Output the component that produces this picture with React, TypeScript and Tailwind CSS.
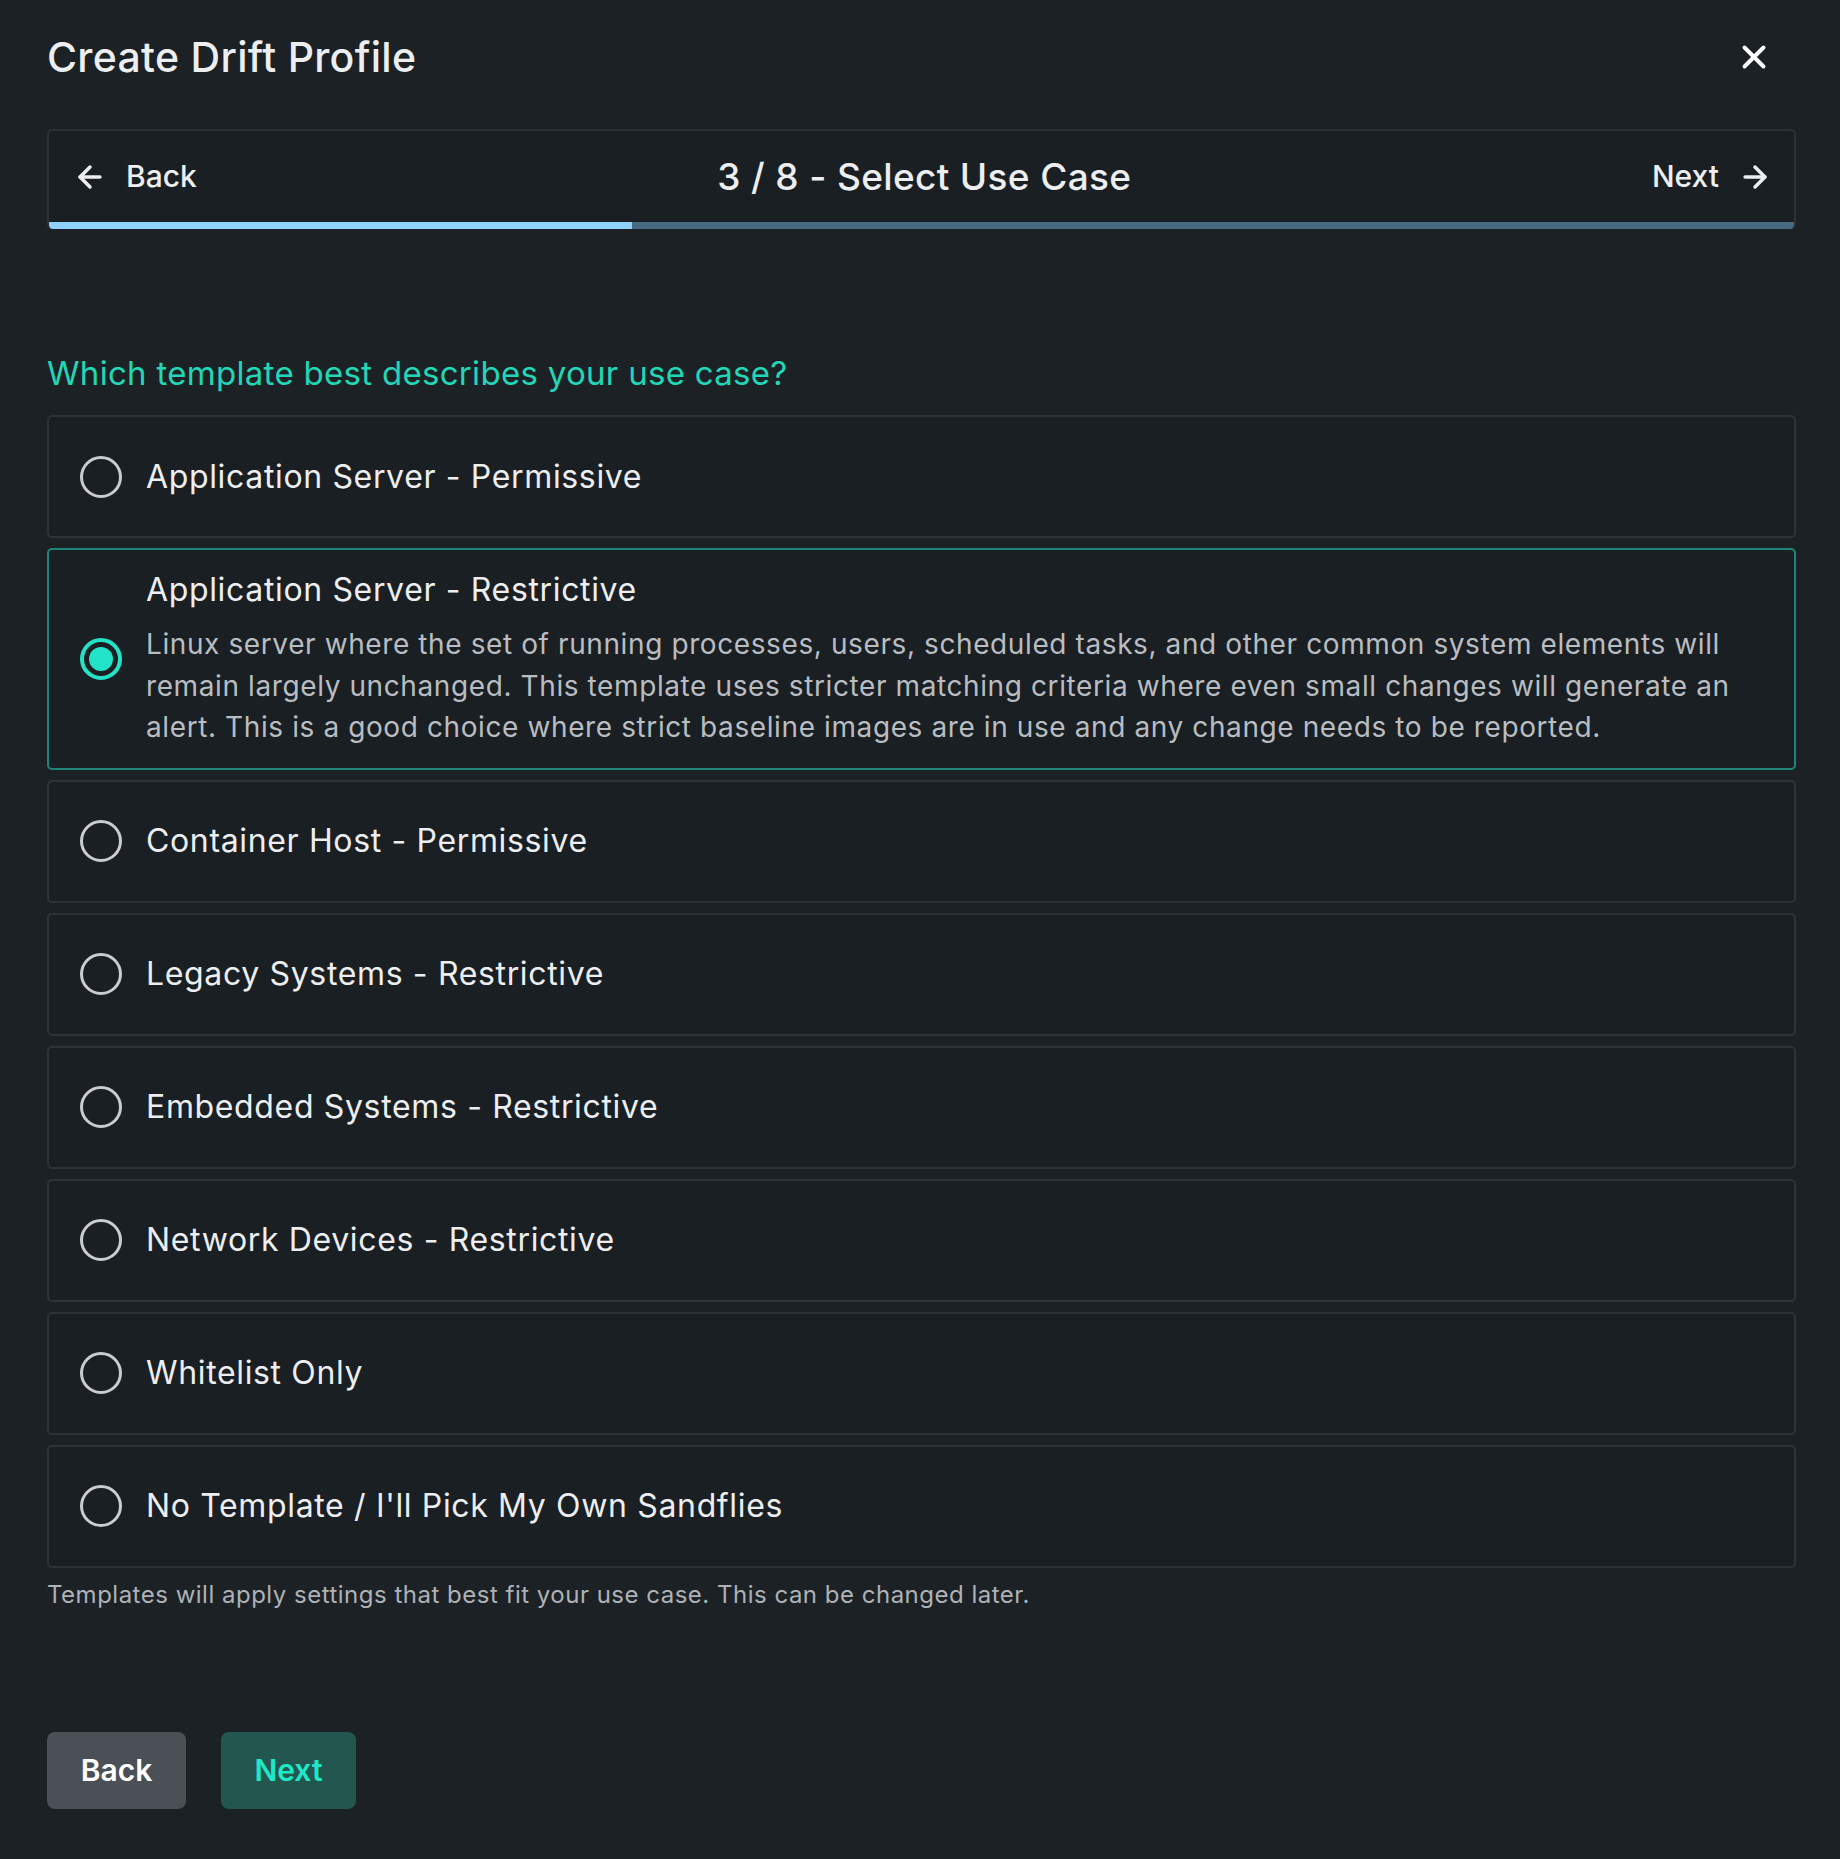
import { useState } from 'react';
import { ArrowLeft, ArrowRight, X } from 'lucide-react';

type Template = {
  id: string;
  name: string;
  description?: string;
};

const templates: Template[] = [
  { id: 'app-permissive', name: 'Application Server - Permissive' },
  {
    id: 'app-restrictive',
    name: 'Application Server - Restrictive',
    description:
      'Linux server where the set of running processes, users, scheduled tasks, and other common system elements will remain largely unchanged. This template uses stricter matching criteria where even small changes will generate an alert. This is a good choice where strict baseline images are in use and any change needs to be reported.',
  },
  { id: 'container-permissive', name: 'Container Host - Permissive' },
  { id: 'legacy-restrictive', name: 'Legacy Systems - Restrictive' },
  { id: 'embedded-restrictive', name: 'Embedded Systems - Restrictive' },
  { id: 'network-restrictive', name: 'Network Devices - Restrictive' },
  { id: 'whitelist', name: 'Whitelist Only' },
  { id: 'none', name: "No Template / I'll Pick My Own Sandflies" },
];

const STEP = 3;
const TOTAL = 8;

const Radio = ({ checked }: { checked: boolean }) => (
  <span
    className={
      checked
        ? 'flex size-[42px] shrink-0 items-center justify-center rounded-full border-[4px] border-[#22e3c8]'
        : 'flex size-[42px] shrink-0 items-center justify-center rounded-full border-[3px] border-[#c9cdd0]'
    }
  >
    {checked && <span className="size-[24px] rounded-full bg-[#22e3c8]" />}
  </span>
);

const App = () => {
  const [selected, setSelected] = useState<string>('app-restrictive');

  return (
    <div className="min-h-[1859px] bg-[#1b2125] pl-[47px] pr-[44px] pt-[30px] pb-[49px] font-['Inter','Noto_Sans',sans-serif] text-[#eceef0]">
      {/* header */}
      <div className="flex items-center justify-between">
        <h1 className="text-[41px] font-medium leading-[54px] tracking-[0.3px]">Create Drift Profile</h1>
        <button className="mr-[23px] text-white">
          <X size={38} strokeWidth={2.5} />
        </button>
      </div>

      {/* stepper */}
      <div className="mt-[45px] overflow-hidden rounded-[5px] border-x-2 border-t-2 border-[#2b3135] bg-[#1a1f23]">
        <div className="flex h-[91px] items-center justify-between pl-[24px] pr-[22px]">
          <button className="flex items-center gap-[19px] text-[30px] font-medium">
            <ArrowLeft size={34} strokeWidth={2.5} />
            Back
          </button>
          <div className="text-[37px] font-medium tracking-[0.35px]">
            {STEP} / {TOTAL} - Select Use Case
          </div>
          <button className="flex items-center gap-[19px] text-[30px] font-medium">
            Next
            <ArrowRight size={34} strokeWidth={2.5} />
          </button>
        </div>
        <div className="flex h-[7px] bg-[#486a80]">
          <div className="h-full bg-[#8ed1fb]" style={{ width: `${(584 / 1749) * 100}%` }} />
        </div>
      </div>

      {/* question */}
      <h2 className="mt-[122px] text-[33px] leading-[44px] tracking-[0.3px] text-[#22d6b7]">
        Which template best describes your use case?
      </h2>

      <div className="mt-[20px] flex flex-col gap-[10px]">
        {templates.map((tpl) => {
          const isSelected = selected === tpl.id;
          return (
            <label
              key={tpl.id}
              onClick={() => setSelected(tpl.id)}
              className={
                isSelected
                  ? 'flex min-h-[123px] cursor-pointer items-center gap-[24px] rounded-[5px] border-2 border-[#1f8577] bg-[#1a1f23] py-[19px] pl-[31px] pr-[32px]'
                  : 'flex min-h-[123px] cursor-pointer items-center gap-[24px] rounded-[5px] border-2 border-[#2d3337] bg-[#1a1f23] py-[19px] pl-[31px] pr-[32px]'
              }
            >
              <Radio checked={isSelected} />
              <div className="flex flex-col">
                <span className="text-[32px] leading-[42px] tracking-[0.65px] text-[#eceef0]">{tpl.name}</span>
                {isSelected && tpl.description && (
                  <p className="mt-[13px] text-[28px] leading-[41.5px] tracking-[0.6px] text-[#b9bdc1]">
                    {tpl.description}
                  </p>
                )}
              </div>
            </label>
          );
        })}
      </div>

      <p className="mt-[11px] text-[24px] leading-[32px] tracking-[0.5px] text-[#aeb2b6]">
        Templates will apply settings that best fit your use case. This can be changed later.
      </p>

      {/* footer actions */}
      <div className="mt-[121px] flex gap-[35px]">
        <button className="h-[77px] w-[139px] rounded-[8px] bg-[#4a5055] text-[30px] font-semibold text-white">
          Back
        </button>
        <button className="h-[77px] w-[135px] rounded-[8px] bg-[#22564f] text-[30px] font-semibold text-[#1ee8c8]">
          Next
        </button>
      </div>
    </div>
  );
};

export default App;
